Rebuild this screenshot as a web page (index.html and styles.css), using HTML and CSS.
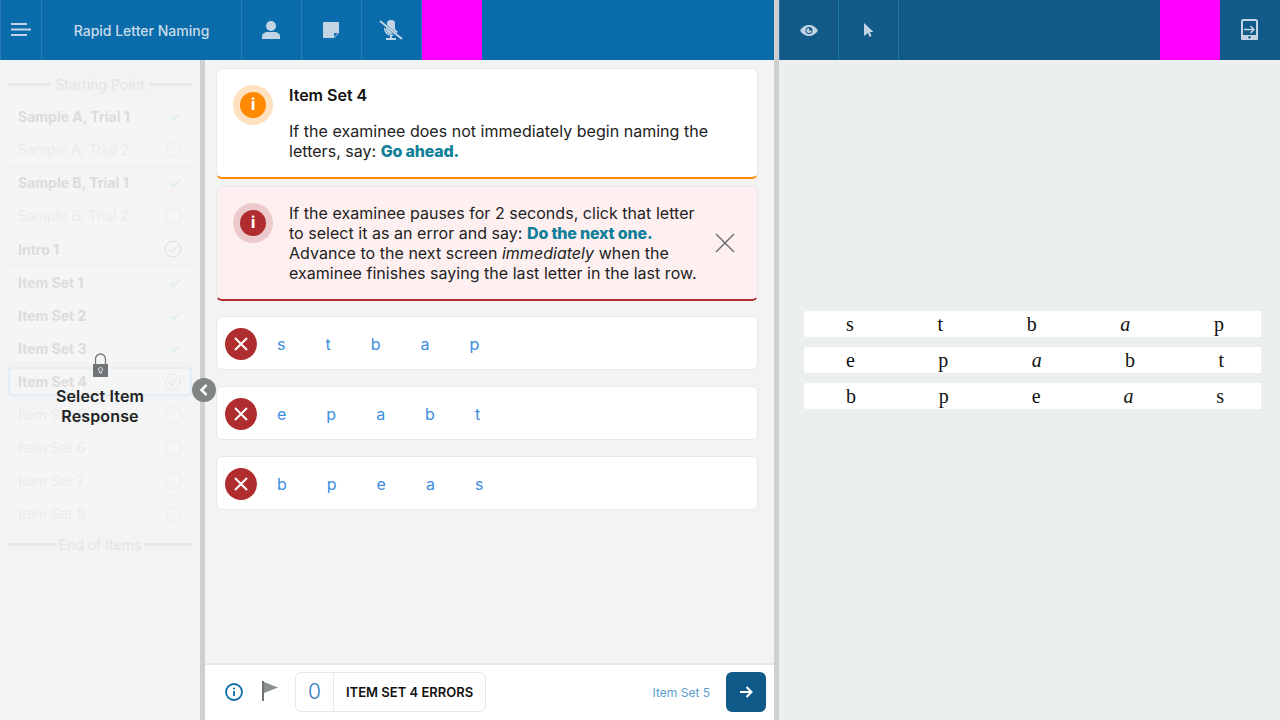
FILE: index.html
```html
<!DOCTYPE html>
<html lang="en">
<head>
    <meta charset="UTF-8">
    <title>Rapid Letter Naming</title>
    <link rel="stylesheet" href="styles.css">
</head>
<body>
    <header class="topbar">
        <div class="bar bar-left">
            <div class="cell cell-menu">
                <svg width="20" height="14" viewBox="0 0 20 14"><path d="M0 1h16M0 6.500h20M0 12h16" stroke="#c3d5e4" stroke-width="2" fill="none"/></svg>
            </div>
            <div class="cell cell-title">Rapid Letter Naming</div>
            <div class="cell">
                <svg class="nudge" width="18" height="18" viewBox="0 0 18 18"><circle cx="9" cy="5" r="5" fill="#c3d5e4"/><path d="M0 18v-2.500C0 12.500 3 11 5.500 11h7c2.500 0 5.500 1.500 5.500 4.500V18z" fill="#c3d5e4"/></svg>
            </div>
            <div class="cell">
                <svg class="nudge" width="16" height="16" viewBox="0 0 16 16"><path d="M1 0h14a1 1 0 0 1 1 1v10l-5 5H1a1 1 0 0 1-1-1V1a1 1 0 0 1 1-1z" fill="#c3d5e4"/><path d="M11 11h4l-4 4z" fill="#0b6cab"/></svg>
            </div>
            <div class="cell">
                <svg class="nudge" width="24" height="20" viewBox="0 0 24 20"><path d="M8 3a4 3 0 0 1 8 0v6l3 3-1.500 1L8 5zM7 7.500l7 6c-3 1-7 0-7-6zM5 8h1.500c0 3.500 2.500 6 5.500 6.500l1.500-.2 1.500 1.200-2 .5V18h4v2H7v-2h4v-2.500C7.500 15 5 12 5 8z" fill="#c3d5e4"/><path d="M1 1l22 18" stroke="#c3d5e4" stroke-width="2"/></svg>
            </div>
            <div class="cell cell-magenta"></div>
        </div>
        <div class="bar-split"></div>
        <div class="bar bar-right">
            <div class="cell cell-eye">
                <svg width="18" height="11" viewBox="0 0 18 11"><path d="M0 5.500C2 2 5.500 0 9 0s7 2 9 5.500C16 9 12.500 11 9 11S2 9 0 5.500z" fill="#c3d5e4"/><circle cx="9" cy="5.500" r="3.500" fill="#125a87"/><path d="M9 3a2.500 2.500 0 1 0 2.500 2.500H9z" fill="#c3d5e4"/></svg>
            </div>
            <div class="cell">
                <svg width="10" height="14" viewBox="0 0 10 14"><path d="M0 0l9.500 9H6l1.500 4-2 1L4 10l-4 3z" fill="#c3d5e4"/></svg>
            </div>
            <div class="bar-fill"></div>
            <div class="cell cell-magenta"></div>
            <div class="cell cell-last">
                <svg class="nudge" width="17" height="21" viewBox="0 0 17 21"><rect x="1" y="1" width="15" height="19" rx="1.500" fill="none" stroke="#c3d5e4" stroke-width="2"/><rect x="0" y="16" width="17" height="5" rx="1.500" fill="#c3d5e4"/><circle cx="8.500" cy="18.300" r="1.200" fill="#125a87"/><path d="M3 10.500h10M9.500 7l3.500 3.500L9.500 14" fill="none" stroke="#c3d5e4" stroke-width="1.500"/></svg>
            </div>
        </div>
    </header>

    <main class="layout">
        <aside class="sidebar">
            <div class="section-head"><span>Starting Point</span></div>
            <ul class="items">
                <li class="item done">Sample A, Trial 1 <svg class="tick" width="12" height="10" viewBox="0 0 14 12"><path d="M1 6l4 4 8-8" /></svg></li>
                <li class="item">Sample A, Trial 2 <span class="ring"></span></li>
                <li class="item done">Sample B, Trial 1 <svg class="tick" width="12" height="10" viewBox="0 0 14 12"><path d="M1 6l4 4 8-8" /></svg></li>
                <li class="item">Sample B, Trial 2 <span class="ring"></span></li>
                <li class="item done item-tall">Intro 1 <svg class="check-ring" width="18" height="18" viewBox="0 0 18 18"><circle cx="9" cy="9" r="8"/><path d="M5 9l3 3 5-6"/></svg></li>
                <li class="item done">Item Set 1 <svg class="tick" width="12" height="10" viewBox="0 0 14 12"><path d="M1 6l4 4 8-8" /></svg></li>
                <li class="item done">Item Set 2 <svg class="tick" width="12" height="10" viewBox="0 0 14 12"><path d="M1 6l4 4 8-8" /></svg></li>
                <li class="item done">Item Set 3 <svg class="tick" width="12" height="10" viewBox="0 0 14 12"><path d="M1 6l4 4 8-8" /></svg></li>
                <li class="item done current">Item Set 4 <svg class="check-ring dashed" width="18" height="18" viewBox="0 0 18 18"><circle cx="9" cy="9" r="7.500"/><path d="M5 9l3 3 5-6"/></svg></li>
                <li class="item">Item Set 5 <span class="ring"></span></li>
                <li class="item">Item Set 6 <span class="ring"></span></li>
                <li class="item">Item Set 7 <span class="ring"></span></li>
                <li class="item">Item Set 8 <span class="ring"></span></li>
            </ul>
            <div class="section-head section-end"><span>End of Items</span></div>

            <div class="lock-note">
                <svg width="15" height="24" viewBox="0 0 15 24"><path d="M2.500 12V6a5 5 0 0 1 10 0v6" fill="none" stroke="#777" stroke-width="1.300"/><path d="M0 11h15v13H0z" fill="#6f7477"/><path d="M7.500 14.500a2 2 0 0 1 1 3.700V20h-2v-1.800a2 2 0 0 1 1-3.700z" fill="none" stroke="#fff" stroke-width=".8"/></svg>
                <div>Select Item<br>Response</div>
            </div>
            <div class="collapse">
                <svg width="10" height="14" viewBox="0 0 10 14"><path d="M7.500 2L2.500 7l5 5" fill="none" stroke="#fff" stroke-width="2.500"/></svg>
            </div>
        </aside>

        <div class="splitter"></div>

        <section class="center">
            <div class="scroll">
                <div class="card card-info">
                    <div class="badge badge-orange"><span>i</span></div>
                    <div class="card-body">
                        <h3>Item Set 4</h3>
                        <p>If the examinee does not immediately begin naming the letters, say: <b>Go ahead.</b></p>
                    </div>
                </div>
                <div class="card card-warn">
                    <div class="badge badge-red"><span>i</span></div>
                    <div class="card-body">
                        <p>If the examinee pauses for 2 seconds, click that letter to select it as an error and say: <b>Do the next one.</b> Advance to the next screen <i>immediately</i> when the examinee finishes saying the last letter in the last row.</p>
                    </div>
                    <svg class="close" width="20" height="20" viewBox="0 0 20 20"><path d="M1 1l18 18M19 1L1 19" stroke="#6b7073" stroke-width="1.500" fill="none"/></svg>
                </div>

                <div class="row">
                    <div class="row-x"><svg width="16" height="16" viewBox="0 0 16 16"><path d="M2 2l12 12M14 2L2 14" stroke="#fff" stroke-width="2"/></svg></div>
                    <span>s</span><span>t</span><span>b</span><span>a</span><span>p</span>
                </div>
                <div class="row">
                    <div class="row-x"><svg width="16" height="16" viewBox="0 0 16 16"><path d="M2 2l12 12M14 2L2 14" stroke="#fff" stroke-width="2"/></svg></div>
                    <span>e</span><span>p</span><span>a</span><span>b</span><span>t</span>
                </div>
                <div class="row">
                    <div class="row-x"><svg width="16" height="16" viewBox="0 0 16 16"><path d="M2 2l12 12M14 2L2 14" stroke="#fff" stroke-width="2"/></svg></div>
                    <span>b</span><span>p</span><span>e</span><span>a</span><span>s</span>
                </div>
            </div>

            <footer class="footer">
                <svg class="foot-info" width="18" height="18" viewBox="0 0 18 18"><circle cx="9" cy="9" r="8" fill="none" stroke="#0f6cab" stroke-width="1.800"/><path d="M9 8v5" stroke="#0f6cab" stroke-width="1.800"/><circle cx="9" cy="5.500" r="1.100" fill="#0f6cab"/></svg>
                <svg class="foot-flag" width="16" height="20" viewBox="0 0 16 20"><path d="M0 0h2v20H0z" fill="#6f7477"/><path d="M2 1l14 5.500L2 12z" fill="#8b9093"/></svg>
                <div class="counter">
                    <div class="counter-num">0</div>
                    <div class="counter-label">ITEM SET 4 ERRORS</div>
                </div>
                <div class="next-label">Item Set 5</div>
                <div class="next">
                    <svg width="14" height="14" viewBox="0 0 14 14"><path d="M1 7h11M7.500 2l5 5-5 5" fill="none" stroke="#fff" stroke-width="2"/></svg>
                </div>
            </footer>
        </section>

        <div class="splitter"></div>

        <section class="stimulus">
            <div class="stim-row"><span>s</span><span>t</span><span>b</span><span class="alpha">a</span><span>p</span></div>
            <div class="stim-row"><span>e</span><span>p</span><span class="alpha">a</span><span>b</span><span>t</span></div>
            <div class="stim-row"><span>b</span><span>p</span><span>e</span><span class="alpha">a</span><span>s</span></div>
        </section>
    </main>
</body>
</html>
```

FILE: styles.css
```css
* {
    box-sizing: border-box;
}

html, body {
    height: 100%;
}

body {
    margin: 0;
    display: flex;
    flex-direction: column;
    overflow: hidden;
    font-family: Inter, "Liberation Sans", sans-serif;
    color: #222;
    background: #f3f3f4;
}

/* Top bar */
.topbar {
    display: flex;
    height: 60px;
    flex: none;
}

.bar {
    display: flex;
    height: 60px;
}

.bar-left {
    width: 774px;
    background: #0b6cab;
    border-left: 1px solid #2a7db5;
}

.bar-right {
    flex: 1;
    background: #125a87;
}

.bar-split {
    width: 5px;
    background: #cfcfcf;
}

.bar-fill {
    flex: 1;
    border-left: 1px solid #1d75ad;
}

.cell {
    width: 60px;
    display: flex;
    align-items: center;
    justify-content: center;
    border-right: 1px solid #2a7db5;
}

.nudge {
    margin-left: -1px;
    margin-top: -1px;
}

.bar-right .cell {
    border-left: 1px solid #1d75ad;
    border-right: 0;
}

.bar-right .cell-eye {
    width: 59px;
}

.cell-menu {
    width: 41px;
}

.cell-title {
    width: 200px;
    color: #c9dcea;
    font-size: 14px;
    font-weight: 500;
}

.bar .cell.cell-magenta {
    background: #ff00ff;
    border: 0;
}

.bar .cell.cell-last {
    border: 0;
}

/* Left list */
.layout {
    flex: 1;
    display: flex;
    min-height: 0;
}

.sidebar {
    position: relative;
    width: 200px;
    flex: none;
    padding: 15px 8px 0;
    background: #f3f3f3;
}

.section-head {
    display: flex;
    align-items: center;
    gap: 4px;
    height: 18px;
    font-size: 14px;
    color: #e3e4e4;
    white-space: nowrap;
}

.section-head::before,
.section-head::after {
    content: "";
    flex: 1;
    height: 3px;
    background: #e6e8e8;
}

.section-end {
    margin-top: 7px;
}

.items {
    list-style: none;
    margin: 9px 0 0;
    padding: 0;
}

.item {
    display: flex;
    align-items: center;
    justify-content: space-between;
    height: 29px;
    margin-bottom: 4px;
    padding: 0 10px;
    border-radius: 4px;
    background: #f5f5f5;
    font-size: 14px;
    color: #ebebeb;
}

.item.done {
    color: #dcdcdc;
    font-weight: 700;
}

.item-tall {
    height: 30px;
}

.item.current {
    border: 2px solid #e3edf6;
    padding: 0 8px;
}

.ring {
    width: 16px;
    height: 16px;
    border: 1px dotted #dedede;
    border-radius: 50%;
}

.tick {
    margin-right: 1px;
}

.tick path {
    fill: none;
    stroke: #e2efea;
    stroke-width: 2.500;
}

.check-ring circle,
.check-ring path {
    fill: none;
    stroke: #dcdedd;
    stroke-width: 1;
}

.check-ring.dashed circle {
    stroke-dasharray: 2 1.500;
}

.lock-note {
    position: absolute;
    top: 293px;
    left: 0;
    width: 200px;
    display: flex;
    flex-direction: column;
    align-items: center;
    gap: 9px;
    text-align: center;
    font-size: 16px;
    font-weight: 600;
    line-height: 20px;
    letter-spacing: .15px;
    color: #222;
}

.collapse {
    position: absolute;
    top: 318px;
    left: 192px;
    z-index: 2;
    width: 24px;
    height: 24px;
    display: flex;
    align-items: center;
    justify-content: center;
    border-radius: 50%;
    background: #7f8584;
}

.splitter {
    width: 5px;
    flex: none;
    background: #cfcfcf;
}

/* Middle column */
.center {
    width: 569px;
    flex: none;
    display: flex;
    flex-direction: column;
}

.scroll {
    flex: 1;
    padding: 8px 16px 0 11px;
}

.card {
    display: flex;
    margin-bottom: 7px;
    padding: 16px;
    background: #fff;
    border: 1px solid #e5e8ef;
    border-radius: 6px;
}

.card-info {
    border-bottom: 2px solid #ff8a00;
}

.card-warn {
    align-items: flex-start;
    margin-bottom: 15px;
    background: #fef0f1;
    border-bottom: 2px solid #b02d2f;
}

.badge {
    width: 40px;
    height: 40px;
    flex: none;
    display: flex;
    align-items: center;
    justify-content: center;
    border-radius: 50%;
}

.badge span {
    width: 26px;
    height: 26px;
    border-radius: 50%;
    color: #fff;
    font-size: 15px;
    font-weight: 800;
    line-height: 26px;
    text-align: center;
}

.badge-orange {
    background: #ffe1bf;
}

.badge-orange span {
    background: #ff8a00;
}

.badge-red {
    background: #ecc9cb;
}

.badge-red span {
    background: #b02d2f;
}

.card-body {
    flex: 1;
    margin-left: 16px;
    font-size: 16px;
    line-height: 20px;
    letter-spacing: .03px;
}

.card-warn .card-body {
    padding-right: 8px;
}

.card-body h3 {
    margin: 0 0 16px;
    font-size: 16px;
    font-weight: 600;
    line-height: 20px;
    letter-spacing: 0;
    color: #111;
}

.card-body p {
    margin: 0;
}

.card-body b {
    font-weight: 800;
    letter-spacing: -.2px;
    color: #0f7f99;
}

.close {
    align-self: center;
    flex: none;
    margin-right: 6px;
}

.row {
    display: flex;
    align-items: center;
    gap: 40px;
    height: 54px;
    margin-bottom: 16px;
    padding: 1px 8px 0;
    background: #fff;
    border: 1px solid #e5e8ef;
    border-radius: 6px;
    font-size: 16px;
    color: #3b8ddf;
}

.row-x {
    width: 32px;
    height: 32px;
    margin-right: -20px;
    display: flex;
    align-items: center;
    justify-content: center;
    border-radius: 50%;
    background: #b02d2f;
}

/* Footer */
.footer {
    flex: none;
    height: 57px;
    display: flex;
    align-items: center;
    padding: 0 8px 2px 20px;
    background: #fff;
    border-top: 2px solid #e6e6e6;
}

.foot-info {
    margin-right: 19px;
}

.foot-flag {
    margin-right: 17px;
    margin-top: -1px;
}

.counter {
    display: flex;
    height: 40px;
    background: #fff;
    border: 1px solid #e5e8ef;
    border-radius: 6px;
}

.counter-num {
    width: 38px;
    display: flex;
    align-items: center;
    justify-content: center;
    border-right: 1px solid #e5e8ef;
    font-size: 21px;
    font-weight: 300;
    color: #2c7fc4;
}

.counter-label {
    display: flex;
    align-items: center;
    padding: 0 12px;
    font-size: 13px;
    font-weight: 600;
    color: #111;
}

.next-label {
    margin-left: auto;
    margin-right: 16px;
    padding-top: 1px;
    font-size: 12px;
    color: #5b9bd0;
}

.next {
    width: 40px;
    height: 40px;
    display: flex;
    align-items: center;
    justify-content: center;
    border-radius: 6px;
    background: #0f5a89;
}

/* Right pane */
.stimulus {
    flex: 1;
    display: flex;
    flex-direction: column;
    justify-content: center;
    gap: 10px;
    padding: 0 19px 60px 25px;
    background: #eceff0;
}

.stim-row {
    display: flex;
    justify-content: space-between;
    align-items: center;
    height: 26px;
    padding: 0 37px 0 42px;
    background: #fff;
    border-radius: 3px 0 0 3px;
    font-family: "Liberation Serif", serif;
    font-size: 20px;
    color: #111;
}

.alpha {
    font-style: italic;
}
```
